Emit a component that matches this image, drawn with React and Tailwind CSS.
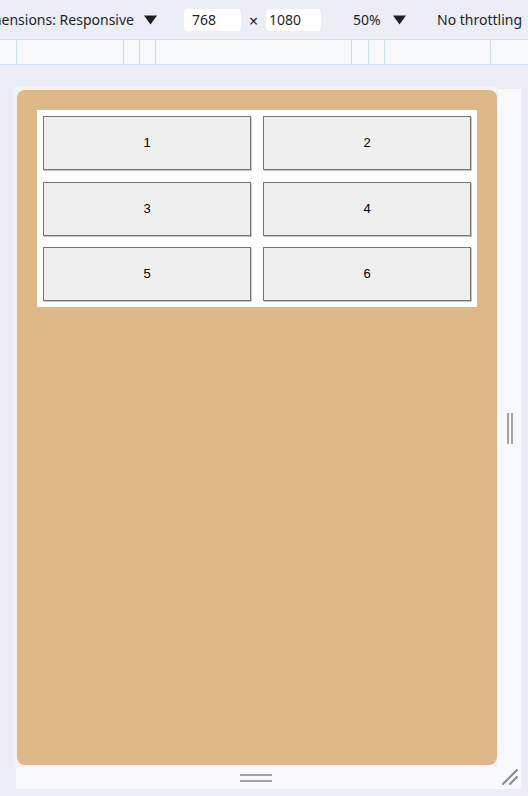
const rulerStops = [17, 124, 140, 156, 352, 369, 385, 491, 528];

function Caret() {
  return (
    <svg width="13" height="10" viewBox="0 0 13 10" className="shrink-0">
      <path d="M0 0.5 L13 0.5 L6.5 9.5 Z" fill="#1f1f1f" />
    </svg>
  );
}

export default function App() {
  let prev = 0;
  return (
    <div
      className="w-[528px] h-[796px] overflow-hidden bg-[#ebeef7] text-[#1f1f1f]"
      style={{ fontFamily: '"Noto Sans", "Open Sans", sans-serif' }}
    >
      {/* device toolbar */}
      <div className="h-[39px] flex items-center whitespace-nowrap text-[14px]">
        <div className="w-[134px] overflow-hidden flex justify-end shrink-0">
          <span className="shrink-0">Dimensions: Responsive</span>
        </div>
        <div className="ml-[10px] mt-[1px]"><Caret /></div>
        <div className="ml-[27px] w-[57px] h-[22px] bg-white rounded-[4px] pl-[8px] flex items-center shrink-0">768</div>
        <div className="w-[25px] text-center text-[16px] mt-[3px] shrink-0">×</div>
        <div className="w-[55px] h-[22px] bg-white rounded-[4px] pl-[3px] flex items-center shrink-0">1080</div>
        <div className="ml-[32px] w-[31px] shrink-0">50%</div>
        <div className="ml-[9px] mt-[1px]"><Caret /></div>
        <div className="ml-[31px] shrink-0">No throttling</div>
      </div>

      {/* ruler */}
      <div className="h-[26px] flex border-y border-[#d3e3fd] bg-[#f7f9fd]">
        {rulerStops.map((x, i) => {
          const w = x - prev;
          prev = x;
          return (
            <div
              key={i}
              className={i < rulerStops.length - 1 ? "shrink-0 border-r border-[#cadcfb]" : "shrink-0"}
              style={{ width: w }}
            />
          );
        })}
      </div>

      {/* emulated viewport */}
      <div className="mt-[24px] ml-[16px] w-[505px] h-[700px] bg-[#f7f9fd] flex flex-col">
        <div className="h-[678px] flex">
          <div className="-ml-[2px] -mt-[2px] w-[484px] h-[680px] bg-[#f2f3f6] pl-[3px] pt-[3px] pr-[1px] pb-[2px] shrink-0">
            <div className="w-[480px] h-[675px] bg-[#deb887] rounded-[8px] p-[20px]">
              <div className="w-[440px] bg-white p-[6px] grid grid-cols-2 gap-x-[12px] gap-y-[11.5px]">
                {[1, 2, 3, 4, 5, 6].map((n) => (
                  <button
                    key={n}
                    className="h-[54px] bg-[#efefef] border border-[#767676] shadow-[1px_1px_0_#c4c4c4] text-black text-[13px]"
                    style={{ fontFamily: '"Liberation Sans", Arial, sans-serif' }}
                  >
                    {n}
                  </button>
                ))}
              </div>
            </div>
          </div>
          <div className="flex-1 flex items-center justify-center gap-[2px]">
            <div className="w-[2px] h-[31px] bg-[#a3a3a3]" />
            <div className="w-[2px] h-[31px] bg-[#a3a3a3]" />
          </div>
        </div>
        <div className="h-[22px] flex">
          <div className="-ml-[2px] w-[484px] flex flex-col items-center justify-center gap-[4px] shrink-0">
            <div className="w-[32px] h-[2px] bg-[#a3a3a3]" />
            <div className="w-[32px] h-[2px] bg-[#a3a3a3]" />
          </div>
          <div className="flex-1 flex items-end justify-center pb-[4px]">
            <svg width="16" height="16" viewBox="0 0 16 16">
              <path d="M1 15 L15 1 M8 15 L15 8" stroke="#8a8a8a" strokeWidth="2" strokeLinecap="round" />
            </svg>
          </div>
        </div>
      </div>
    </div>
  );
}
